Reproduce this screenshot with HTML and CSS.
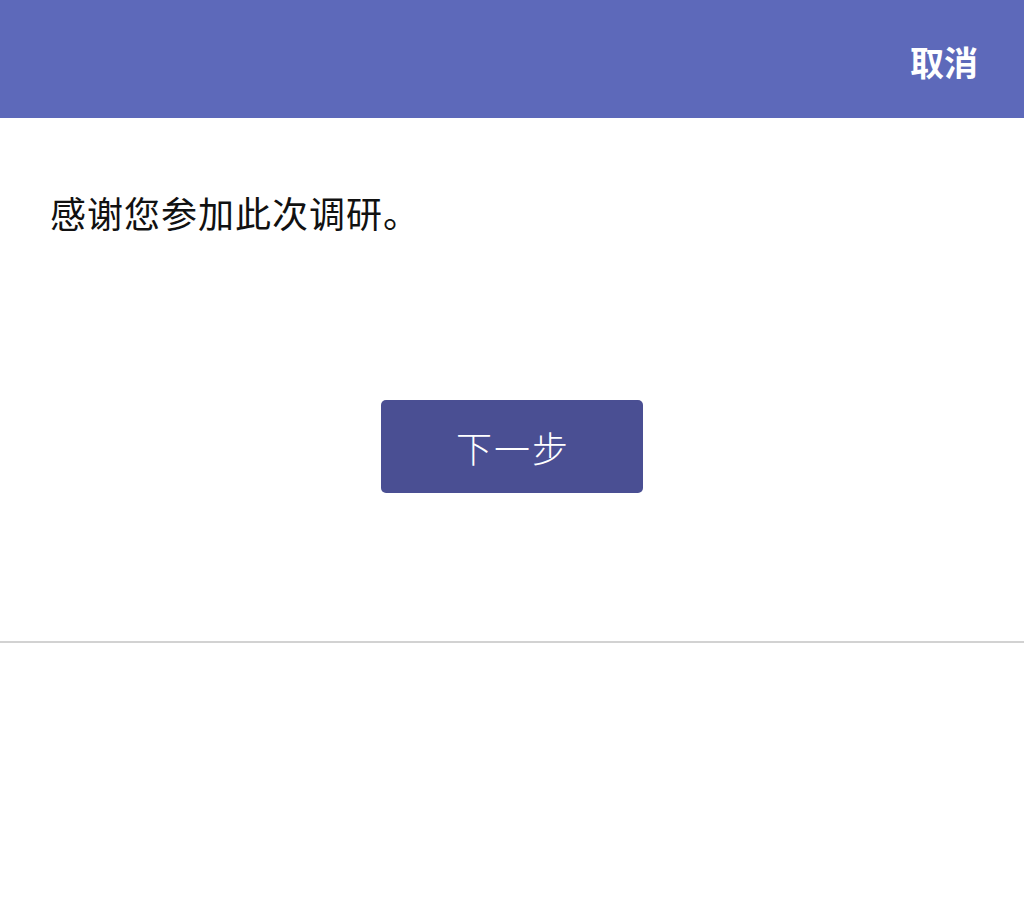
FILE: index.html
```html
<!DOCTYPE html>
<html lang="zh">
<head>
<meta charset="utf-8">
<link rel="stylesheet" href="styles.css">
</head>
<body>
<header class="topbar">
  <span class="cancel">取消</span>
</header>
<main class="content">
  <p class="message">感谢您参加此次调研。</p>
  <div class="actions">
    <button class="next">下一步</button>
  </div>
</main>
<hr class="divider">
</body>
</html>
```
FILE: styles.css
```css
html, body {
  margin: 0;
  padding: 0;
  background: #ffffff;
  font-family: "Noto Sans CJK SC", "Noto Sans", sans-serif;
}
.topbar {
  height: 118px;
  background: #5d69ba;
  display: flex;
  align-items: center;
  justify-content: flex-end;
  padding-right: 46px;
  box-sizing: border-box;
}
.cancel {
  color: #ffffff;
  font-size: 34px;
  font-weight: 700;
  line-height: 1;
  margin-top: 6px;
}
.content {
  height: 523px;
  box-sizing: border-box;
  padding-top: 72px;
  display: flex;
  flex-direction: column;
}
.message {
  margin: 0 0 0 50px;
  font-size: 36px;
  line-height: 44px;
  letter-spacing: 1px;
  color: #111111;
  font-weight: 400;
}
.actions {
  display: flex;
  justify-content: center;
  margin-top: 166px;
}
.next {
  width: 262px;
  height: 93px;
  background: #4a4f93;
  border: none;
  border-radius: 5px;
  color: #ffffff;
  font-family: "Noto Sans CJK SC", "Noto Sans", sans-serif;
  font-size: 36px;
  font-weight: 300;
  padding: 0 0 0 2px;
  letter-spacing: 2px;
}
.divider {
  margin: 0;
  border: none;
  height: 2px;
  background: #d2d2d2;
}
```
